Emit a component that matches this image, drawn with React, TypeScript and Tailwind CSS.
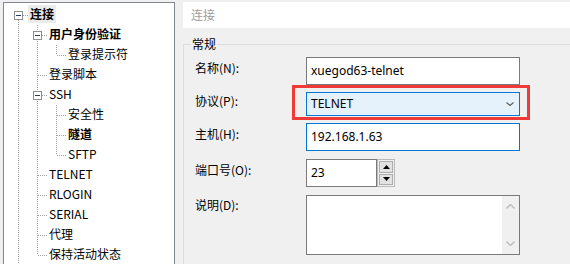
import React from "react";

type Row = { t: string; l: 0 | 1 | 2; b?: boolean; box?: boolean; sel?: boolean };

const rows: Row[] = [
  { t: "连接", l: 0, b: true, box: true, sel: true },
  { t: "用户身份验证", l: 1, b: true, box: true },
  { t: "登录提示符", l: 2 },
  { t: "登录脚本", l: 1 },
  { t: "SSH", l: 1, box: true },
  { t: "安全性", l: 2 },
  { t: "隧道", l: 2, b: true },
  { t: "SFTP", l: 2 },
  { t: "TELNET", l: 1 },
  { t: "RLOGIN", l: 1 },
  { t: "SERIAL", l: 1 },
  { t: "代理", l: 1 },
  { t: "保持活动状态", l: 1 },
];

const padClass: Record<number, string> = { 0: "pl-[24px]", 1: "pl-[45px]", 2: "pl-[64px]" };

const cjk = { fontFamily: '"Noto Sans CJK SC", "Noto Sans", sans-serif' };

function TreeLines() {
  const ox = 4;
  const oy = 3;
  const centers = [18, 37, 56];
  const textX = [28, 47, 66];
  const cy = (i: number) => 15 + 20 * i;
  const dash = { stroke: "#a0a0a0", strokeWidth: 1, strokeDasharray: "1 1", shapeRendering: "crispEdges" as const };
  const v = (x: number, y1: number, y2: number, k: string) => (
    <line key={k} x1={x - ox + 0.5} x2={x - ox + 0.5} y1={y1 - oy} y2={y2 - oy} {...dash} />
  );
  const h = (x1: number, x2: number, y: number, k: string) => (
    <line key={k} x1={x1 - ox} x2={x2 - ox} y1={y - oy + 0.5} y2={y - oy + 0.5} {...dash} />
  );
  const els: React.ReactNode[] = [];
  els.push(v(18, 20, 264, "v0"));
  els.push(v(37, 25, 255, "v1"));
  els.push(v(56, 45, 55, "v2a"));
  els.push(v(56, 105, 155, "v2b"));
  rows.forEach((r, i) => {
    const c = centers[r.l];
    const start = r.box ? c + 5 : c + 1;
    els.push(h(start, textX[r.l], cy(i), "h" + i));
  });
  rows.forEach((r, i) => {
    if (!r.box) return;
    const c = centers[r.l];
    const x = c - 4 - ox;
    const y = cy(i) - 4 - oy;
    els.push(
      <g key={"b" + i} shapeRendering="crispEdges">
        <rect x={x + 0.5} y={y + 0.5} width={8} height={8} fill="#ffffff" stroke="#8e8f8f" />
        <line x1={x + 2} x2={x + 7} y1={y + 4.5} y2={y + 4.5} stroke="#2a3b68" strokeWidth={1} />
      </g>
    );
  });
  return (
    <svg className="absolute left-0 top-0" width={170} height={262}>
      {els}
    </svg>
  );
}

function Chevron({ up, color, w = 9, sw = 1.6 }: { up?: boolean; color: string; w?: number; sw?: number }) {
  const hh = Math.round(w / 2);
  return (
    <svg width={w} height={hh} viewBox={`0 0 ${w} ${hh}`}>
      {up ? (
        <polyline points={`0.5,${hh - 0.5} ${w / 2},0.5 ${w - 0.5},${hh - 0.5}`} fill="none" stroke={color} strokeWidth={sw} />
      ) : (
        <polyline points={`0.5,0.5 ${w / 2},${hh - 0.5} ${w - 0.5},0.5`} fill="none" stroke={color} strokeWidth={sw} />
      )}
    </svg>
  );
}

export default function App() {
  const latin = { fontFamily: '"Noto Sans", "Noto Sans CJK SC", sans-serif' };
  return (
    <div className="w-[570px] h-[264px] bg-[#f0f0f0] flex overflow-hidden text-black" style={cjk}>
      {/* Tree panel */}
      <div className="relative ml-[3px] mt-[2px] w-[172px] h-[262px] shrink-0 bg-white border-l border-t border-r border-[#828790]">
        <TreeLines />
        <div className="relative flex flex-col pt-[1px]">
          {rows.map((r, i) => (
            <div key={i} className={`h-[20px] flex items-center ${padClass[r.l]}`}>
              <span
                className={`text-[12px] leading-[18px] h-[18px] ${r.sel ? "bg-[#ebebeb] px-[2px]" : ""} ${
                  r.b ? "font-bold" : "font-normal"
                }`}
              >
                {r.t}
              </span>
            </div>
          ))}
        </div>
      </div>

      {/* Right side */}
      <div className="flex-1 ml-[8px] flex flex-col">
        <div className="mt-[2px] h-[26px] bg-white pl-[8px] flex items-center text-[12px] text-[#9d9d9d]">连接</div>
        <div className="relative mt-[16px] flex-1 border-t border-l border-[#dcdcdc] pl-[11px] pt-[12px]">
          <div className="absolute left-[7px] -top-[8px] bg-[#f0f0f0] px-[1px] text-[12px] leading-[14px]">常规</div>

          {/* Name */}
          <div className="flex items-start">
            <div className="w-[111px] pt-[3px] text-[12px] leading-[16px]">名称(N):</div>
            <div className="w-[214px] h-[28px] border border-[#7a7a7a] bg-white flex items-center pl-[4px] text-[12px]" style={latin}>
              xuegod63-telnet
            </div>
          </div>

          {/* Protocol */}
          <div className="flex items-start mt-[7px]">
            <div className="w-[111px] pt-[1px] text-[12px] leading-[16px]">协议(P):</div>
            <div className="w-[214px] h-[24px] border border-[#0078d7] bg-[#e5f1fb] flex items-center justify-between pl-[4px] pr-[5px] text-[12px]" style={latin}>
              <span>TELNET</span>
              <Chevron color="#606060" w={8} sw={1.2} />
            </div>
          </div>

          {/* Host */}
          <div className="flex items-start mt-[7px]">
            <div className="w-[111px] pt-[3px] text-[12px] leading-[16px]">主机(H):</div>
            <div className="w-[214px] h-[28px] border border-[#0078d7] bg-white flex items-center pl-[4px] text-[12px]" style={latin}>
              192.168.1.63
            </div>
          </div>

          {/* Port */}
          <div className="flex items-start mt-[8px]">
            <div className="w-[111px] pt-[3px] text-[12px] leading-[16px]">端口号(O):</div>
            <div className="w-[71px] h-[28px] border border-[#7a7a7a] bg-white flex items-center pl-[4px] text-[12px]" style={latin}>
              23
            </div>
            <div className="w-[18px] h-[28px] border border-[#b9b9b9] bg-[#f0f0f0] flex flex-col p-[1px] gap-[1px]">
              <div className="flex-1 bg-[#e1e1e1] border border-[#adadad] flex items-center justify-center">
                <svg width="7" height="4" viewBox="0 0 7 4"><polygon points="0,4 7,4 3.5,0" fill="#000" /></svg>
              </div>
              <div className="flex-1 bg-[#e1e1e1] border border-[#adadad] flex items-center justify-center">
                <svg width="7" height="4" viewBox="0 0 7 4"><polygon points="0,0 7,0 3.5,4" fill="#000" /></svg>
              </div>
            </div>
          </div>

          {/* Description */}
          <div className="flex items-start mt-[8px]">
            <div className="w-[111px] pt-[2px] text-[12px] leading-[16px]">说明(D):</div>
            <div className="w-[214px] h-[60px] border border-[#7a7a7a] bg-white flex justify-end">
              <div className="w-[17px] h-full bg-[#f0f0f0] flex flex-col items-center justify-between py-[8px]">
                <Chevron up color="#c2c2c2" />
                <Chevron color="#c2c2c2" />
              </div>
            </div>
          </div>

          {/* Red annotation box */}
          <div className="absolute left-[108px] top-[40px] w-[238px] h-[35px] border-[3px] border-[#ee3b37] pointer-events-none" />
        </div>
      </div>
    </div>
  );
}
